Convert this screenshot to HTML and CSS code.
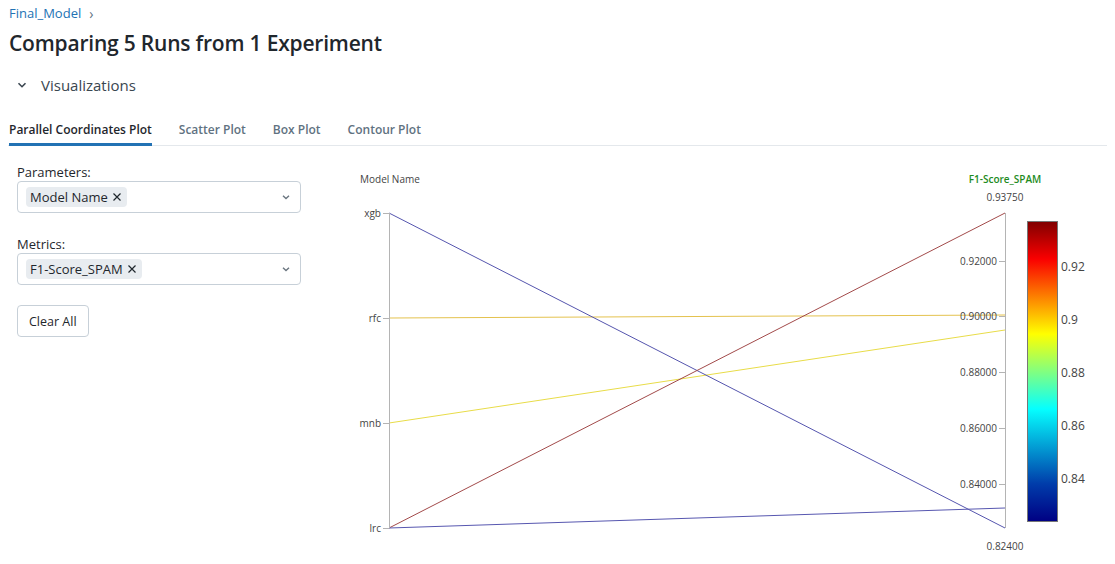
FILE: index.html
```html
<!DOCTYPE html>
<html>
<head>
<meta charset="utf-8">
<link rel="stylesheet" href="styles.css">
</head>
<body>
<div class="page">
  <div class="crumbs"><a class="crumb-link">Final_Model</a><span class="crumb-sep">›</span></div>
  <h1 class="title">Comparing 5 Runs from 1 Experiment</h1>
  <div class="section-head">
    <svg class="chev" width="12" height="12" viewBox="0 0 12 12"><path d="M2.5 4.2 L6 7.7 L9.5 4.2" fill="none" stroke="#3a4650" stroke-width="1.6"/></svg>
    <span>Visualizations</span>
  </div>
  <div class="tabs">
    <div class="tab active">Parallel Coordinates Plot</div>
    <div class="tab">Scatter Plot</div>
    <div class="tab">Box Plot</div>
    <div class="tab">Contour Plot</div>
  </div>
  <div class="content">
    <div class="controls">
      <label class="field-label">Parameters:</label>
      <div class="select">
        <span class="chip">Model Name <svg class="chip-x" width="10" height="10" viewBox="0 0 10 10"><path d="M1.5 1.5 L8.5 8.5 M8.5 1.5 L1.5 8.5" stroke="#1f272d" stroke-width="1.2"/></svg></span>
        <svg class="caret" width="10" height="10" viewBox="0 0 10 10"><path d="M2 3.8 L5 6.6 L8 3.8" fill="none" stroke="#6b7680" stroke-width="1.4"/></svg>
      </div>
      <label class="field-label">Metrics:</label>
      <div class="select">
        <span class="chip">F1-Score_SPAM <svg class="chip-x" width="10" height="10" viewBox="0 0 10 10"><path d="M1.5 1.5 L8.5 8.5 M8.5 1.5 L1.5 8.5" stroke="#1f272d" stroke-width="1.2"/></svg></span>
        <svg class="caret" width="10" height="10" viewBox="0 0 10 10"><path d="M2 3.8 L5 6.6 L8 3.8" fill="none" stroke="#6b7680" stroke-width="1.4"/></svg>
      </div>
      <button class="btn">Clear All</button>
    </div>
    <div class="plot">
      <svg width="775" height="404" viewBox="0 0 775 404" class="plot-svg">
        <defs>
          <linearGradient id="jet" x1="0" y1="1" x2="0" y2="0">
            <stop offset="0" stop-color="rgb(0,0,131)"/>
            <stop offset="0.125" stop-color="rgb(0,60,170)"/>
            <stop offset="0.375" stop-color="rgb(5,255,255)"/>
            <stop offset="0.625" stop-color="rgb(255,255,0)"/>
            <stop offset="0.875" stop-color="rgb(250,0,0)"/>
            <stop offset="1" stop-color="rgb(128,0,0)"/>
          </linearGradient>
        </defs>
        <g fill="none" stroke-width="1">
          <line x1="49" y1="158" x2="665" y2="155" stroke="#e4c24e"/>
          <line x1="49" y1="263" x2="665" y2="170" stroke="#e8dc48"/>
          <line x1="49" y1="53" x2="665" y2="368" stroke="#5555ae"/>
          <line x1="49" y1="368" x2="665" y2="53" stroke="#a24a4a"/>
          <line x1="49" y1="368" x2="665" y2="348" stroke="#5757b0"/>
        </g>
        <g stroke="#b4b4b4" stroke-width="1">
          <line x1="49.5" y1="53" x2="49.5" y2="368"/>
          <line x1="43" y1="53.5" x2="49" y2="53.5"/>
          <line x1="43" y1="158.5" x2="49" y2="158.5"/>
          <line x1="43" y1="263.5" x2="49" y2="263.5"/>
          <line x1="43" y1="368.5" x2="49" y2="368.5"/>
          <line x1="665.5" y1="53" x2="665.5" y2="368"/>
          <line x1="659" y1="101.5" x2="665" y2="101.5"/>
          <line x1="659" y1="156.5" x2="665" y2="156.5"/>
          <line x1="659" y1="212.5" x2="665" y2="212.5"/>
          <line x1="659" y1="268.5" x2="665" y2="268.5"/>
          <line x1="659" y1="324.5" x2="665" y2="324.5"/>
        </g>
        <g class="tick" text-anchor="end">
          <text x="41" y="57">xgb</text>
          <text x="41" y="162">rfc</text>
          <text x="41" y="267">mnb</text>
          <text x="41" y="372">lrc</text>
          <text x="657" y="105">0.92000</text>
          <text x="657" y="160">0.90000</text>
          <text x="657" y="216">0.88000</text>
          <text x="657" y="272">0.86000</text>
          <text x="657" y="328">0.84000</text>
        </g>
        <text class="tick" x="20" y="23">Model Name</text>
        <text class="axis-title" x="665" y="23" text-anchor="middle">F1-Score_SPAM</text>
        <text class="tick" x="665" y="41" text-anchor="middle">0.93750</text>
        <text class="tick" x="665" y="390" text-anchor="middle">0.82400</text>
        <rect x="687.5" y="61.5" width="30" height="300" fill="url(#jet)" stroke="#777" stroke-width="1"/>
        <g class="cbar">
          <text x="721" y="111">0.92</text>
          <text x="721" y="164">0.9</text>
          <text x="721" y="217">0.88</text>
          <text x="721" y="270">0.86</text>
          <text x="721" y="323">0.84</text>
        </g>
      </svg>
    </div>
  </div>
</div>
</body>
</html>
```
FILE: styles.css
```css
html, body {
  margin: 0;
  padding: 0;
  background: #ffffff;
}
body {
  font-family: "Open Sans", "Noto Sans", sans-serif;
  color: #1f272d;
}
.page {
  padding: 0 8px;
}
.crumbs {
  display: flex;
  align-items: center;
  gap: 8px;
  height: 26px;
  padding-left: 1px;
  font-size: 13px;
}
.crumb-link {
  color: #2272b4;
}
.crumb-sep {
  color: #5f7281;
  font-size: 14px;
}
.title {
  margin: 0;
  font-size: 21px;
  font-weight: 600;
  line-height: 34px;
  padding-left: 1px;
  letter-spacing: -0.2px;
}
.section-head {
  display: flex;
  align-items: center;
  gap: 13px;
  height: 36px;
  margin-top: 7px;
  padding-left: 8px;
  font-size: 15px;
  color: #3a4650;
}
.tabs {
  display: flex;
  gap: 27px;
  margin-top: 18px;
  border-bottom: 1px solid #e4e8ec;
  padding-left: 1px;
}
.tab {
  font-size: 12px;
  font-weight: 600;
  color: #5f7281;
  padding-bottom: 4px;
  border-bottom: 3px solid transparent;
  margin-bottom: -1px;
  line-height: 18px;
}
.tab.active {
  color: #1f272d;
  border-bottom-color: #2272b4;
}
.content {
  display: flex;
}
.controls {
  width: 284px;
  padding: 17px 0 0 9px;
  display: flex;
  flex-direction: column;
  align-items: flex-start;
}
.field-label {
  font-size: 13px;
  color: #1f272d;
  line-height: 18px;
  margin-bottom: 0;
}
.select {
  box-sizing: border-box;
  width: 284px;
  height: 32px;
  border: 1px solid #c7d0d8;
  border-radius: 4px;
  display: flex;
  align-items: center;
  justify-content: space-between;
  padding: 0 8px;
  margin-bottom: 22px;
}
.chip {
  display: flex;
  align-items: center;
  gap: 4px;
  background: #e8ecf0;
  border-radius: 4px;
  font-size: 13px;
  line-height: 20px;
  padding: 0 5px 0 4px;
  color: #1f272d;
}
.caret {
  margin-right: 1px;
}
.btn {
  box-sizing: border-box;
  height: 32px;
  padding: 0 11px;
  background: #fff;
  border: 1px solid #c7d0d8;
  border-radius: 4px;
  font-family: inherit;
  font-size: 12.5px;
  color: #1f272d;
  margin-top: -2px;
}
.plot {
  margin-left: 39px;
  margin-top: 14px;
}
.plot-svg {
  display: block;
}
.tick {
  font-family: "Open Sans", sans-serif;
  font-size: 10px;
  fill: #444;
}
.tick text {
  font-family: "Open Sans", sans-serif;
  font-size: 10px;
  fill: #444;
}
.axis-title {
  font-family: "Open Sans", sans-serif;
  font-size: 10px;
  font-weight: 600;
  fill: #1e8c1e;
}
.cbar text {
  font-family: "Open Sans", sans-serif;
  font-size: 12px;
  fill: #444;
}
```
